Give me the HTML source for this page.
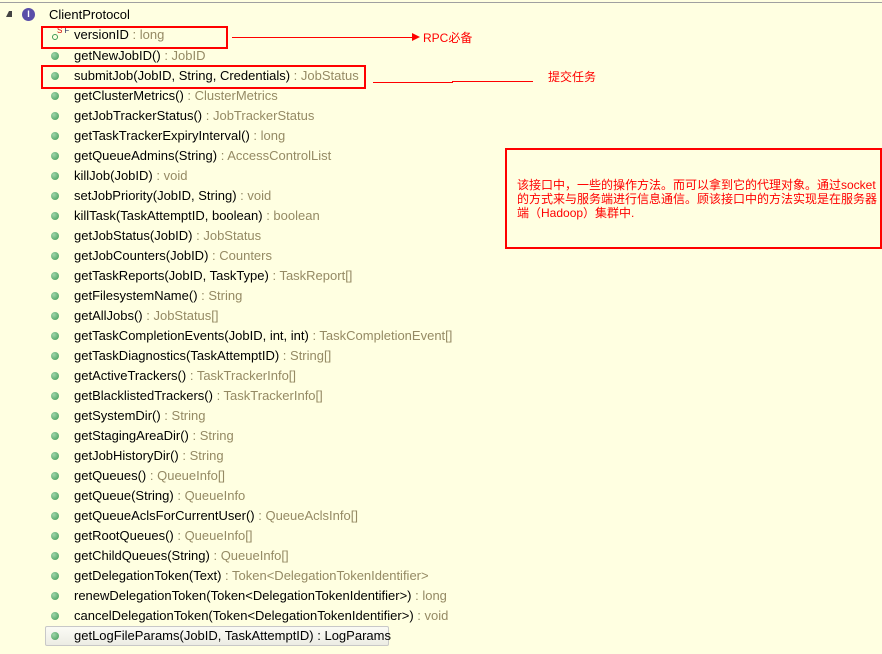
<!DOCTYPE html>
<html><head><meta charset="utf-8"><style>
html,body{margin:0;padding:0}
body{width:882px;height:654px;background:#ffffe1;position:relative;overflow:hidden;font-family:"Liberation Sans","Noto Sans CJK SC",sans-serif;font-size:12px}
.top{position:absolute;left:0;top:2px;width:882px;height:1px;background:#a0a0a0}
.row{position:absolute;left:74px;height:20px;line-height:20px;color:#000;white-space:nowrap;font-size:13px;letter-spacing:0}
.t{color:#958a64}
.dot{position:absolute;left:51px;width:8px;height:8px;border-radius:50%;background:radial-gradient(circle at 35% 35%,#9ed4a9,#3f9a55);z-index:3}
.box{position:absolute;border:2px solid #f00}
.line{position:absolute;height:1px;background:#f00}
.red{position:absolute;color:#f00;font-size:12px;white-space:nowrap}
</style></head><body>
<div class="top"></div>
<div style="position:absolute;left:6px;top:11px;width:0;height:0;border-left:3px solid transparent;border-right:3px solid #444;border-bottom:6px solid #444"></div>
<div style="position:absolute;left:22px;top:8px;width:13px;height:13px;border-radius:50%;background:#5a4ea8;color:#fff;font-size:9px;font-weight:bold;text-align:center;line-height:13px">I</div>
<div class="row" style="left:49px;top:5px">ClientProtocol</div>
<div style="position:absolute;left:52px;top:34px;width:4px;height:4px;border:1.5px solid #3f9a55;border-radius:50%"></div>
<div style="position:absolute;left:57px;top:27px;font-size:8px;line-height:8px;color:#c00;letter-spacing:2px">S<span style="color:#336">F</span></div>
<div class="row" style="top:25px">versionID <span class="t">: long</span></div>
<div id="rows"></div>
<div class="box" style="left:41px;top:26px;width:183px;height:19px"></div>
<div class="box" style="left:41px;top:65px;width:321px;height:20px"></div>
<div class="line" style="left:232px;top:37px;width:182px"></div>
<div style="position:absolute;left:412px;top:33px;border-left:8px solid #f00;border-top:4px solid transparent;border-bottom:4px solid transparent"></div>
<div class="red" style="left:423px;top:29px">RPC必备</div>
<div class="line" style="left:373px;top:82px;width:80px"></div>
<div class="line" style="left:452px;top:81px;width:81px"></div>
<div class="red" style="left:548px;top:68px">提交任务</div>
<div class="box" style="left:505px;top:148px;width:373px;height:97px"></div>
<div class="red" style="left:517px;top:178px;line-height:14px">该接口中，一些的操作方法。而可以拿到它的代理对象。通过socket<br>的方式来与服务端进行信息通信。顾该接口中的方法实现是在服务器<br>端（Hadoop）集群中.</div>
<div style="position:absolute;left:45px;top:626px;width:342px;height:18px;border:1px solid #c8c8c8;border-radius:2px;background:linear-gradient(#fbfbf5,#ecece4)"></div>
<script>
var r=[["getNewJobID()","JobID"],["submitJob(JobID, String, Credentials)","JobStatus"],["getClusterMetrics()","ClusterMetrics"],["getJobTrackerStatus()","JobTrackerStatus"],["getTaskTrackerExpiryInterval()","long"],["getQueueAdmins(String)","AccessControlList"],["killJob(JobID)","void"],["setJobPriority(JobID, String)","void"],["killTask(TaskAttemptID, boolean)","boolean"],["getJobStatus(JobID)","JobStatus"],["getJobCounters(JobID)","Counters"],["getTaskReports(JobID, TaskType)","TaskReport[]"],["getFilesystemName()","String"],["getAllJobs()","JobStatus[]"],["getTaskCompletionEvents(JobID, int, int)","TaskCompletionEvent[]"],["getTaskDiagnostics(TaskAttemptID)","String[]"],["getActiveTrackers()","TaskTrackerInfo[]"],["getBlacklistedTrackers()","TaskTrackerInfo[]"],["getSystemDir()","String"],["getStagingAreaDir()","String"],["getJobHistoryDir()","String"],["getQueues()","QueueInfo[]"],["getQueue(String)","QueueInfo"],["getQueueAclsForCurrentUser()","QueueAclsInfo[]"],["getRootQueues()","QueueInfo[]"],["getChildQueues(String)","QueueInfo[]"],["getDelegationToken(Text)","Token<DelegationTokenIdentifier>"],["renewDelegationToken(Token<DelegationTokenIdentifier>)","long"],["cancelDelegationToken(Token<DelegationTokenIdentifier>)","void"],["getLogFileParams(JobID, TaskAttemptID)","LogParams"]];
var h="";function e(s){return s.replace(/</g,"&lt;").replace(/>/g,"&gt;")}
r.forEach(function(x,i){var y=45+i*20;var last=i==r.length-1;
h+='<div class="dot" style="top:'+(y+7)+'px"></div><div class="row" style="top:'+(y+1)+'px;z-index:2">'+e(x[0])+' <span class="t"'+(last?' style="color:#000"':'')+'>: '+e(x[1])+'</span></div>';});
document.getElementById("rows").innerHTML=h;
</script>
</body></html>
